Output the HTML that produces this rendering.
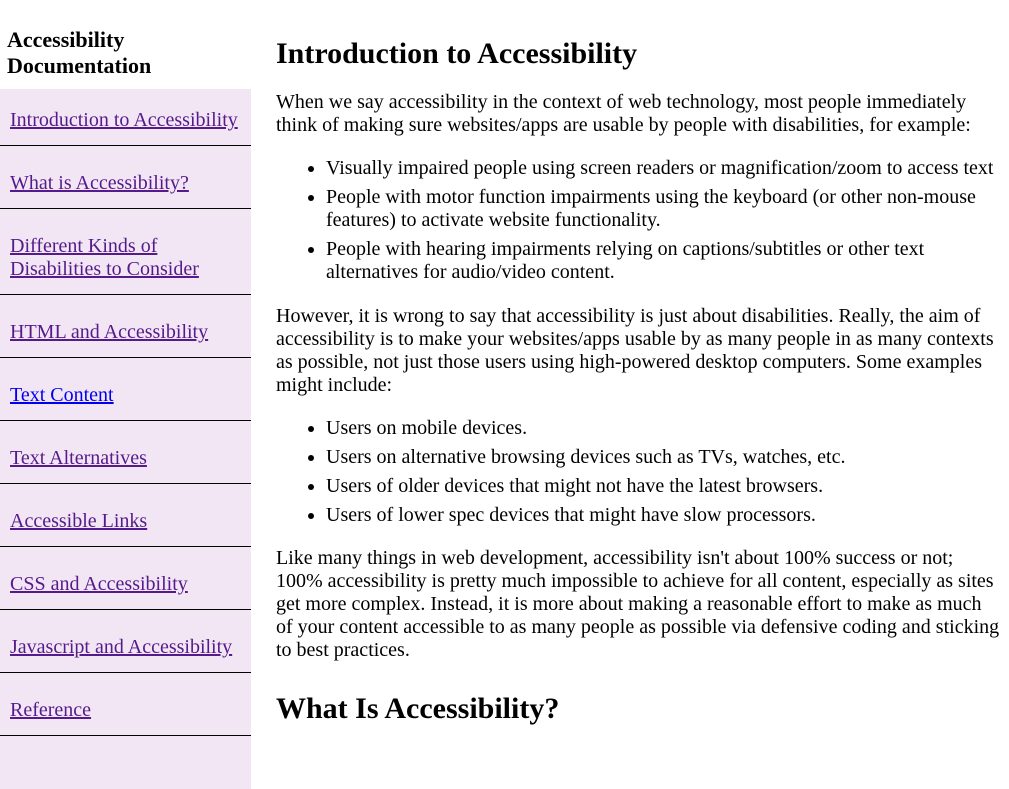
<!DOCTYPE html>
<html><head><meta charset="utf-8"><style>
*{margin:0;padding:0;box-sizing:border-box}
body{width:1009px;height:725px;overflow:hidden;background:#fff;font-family:"Liberation Serif",serif;color:#000;position:relative}
#title{position:absolute;left:7px;top:27px;font-size:22px;font-weight:bold;line-height:26px}
#nav{position:absolute;left:0;top:89px;width:251px;height:700px;background:#f2e6f4;list-style:none;padding:0}
#nav li{border-bottom:1px solid #000;height:63px;padding:26px 0 0 10px;font-size:20px;line-height:23px;margin:0}
#nav li:first-child{height:57px;padding-top:20px}
#nav li.two{height:86px}
#nav a{color:#551a8b;text-decoration:underline}
#nav a.u{color:#0000ee}
#main{position:absolute;left:276px;top:1px;width:730px;font-size:20px;line-height:23px}
h1{font-size:30px;line-height:36px;font-weight:bold;position:absolute;left:0;white-space:nowrap}
p,ul.c{position:absolute;left:0;white-space:nowrap}
ul.c{padding-left:50px}
ul.c li{margin-bottom:6px}
</style></head><body>
<div id="title">Accessibility<br>Documentation</div>
<ul id="nav">
<li><a href="#">Introduction to Accessibility</a></li>
<li><a href="#">What is Accessibility?</a></li>
<li class="two"><a href="#">Different Kinds of<br>Disabilities to Consider</a></li>
<li><a href="#">HTML and Accessibility</a></li>
<li><a class="u" href="#">Text Content</a></li>
<li><a href="#">Text Alternatives</a></li>
<li><a href="#">Accessible Links</a></li>
<li><a href="#">CSS and Accessibility</a></li>
<li><a href="#">Javascript and Accessibility</a></li>
<li><a href="#">Reference</a></li>
</ul>
<div id="main">
<h1 style="top:35px">Introduction to Accessibility</h1>
<p style="top:90px">When we say accessibility in the context of web technology, most people immediately<br>think of making sure websites/apps are usable by people with disabilities, for example:</p>
<ul class="c" style="top:156px">
<li>Visually impaired people using screen readers or magnification/zoom to access text</li>
<li>People with motor function impairments using the keyboard (or other non-mouse<br>features) to activate website functionality.</li>
<li>People with hearing impairments relying on captions/subtitles or other text<br>alternatives for audio/video content.</li>
</ul>
<p style="top:304px">However, it is wrong to say that accessibility is just about disabilities. Really, the aim of<br>accessibility is to make your websites/apps usable by as many people in as many contexts<br>as possible, not just those users using high-powered desktop computers. Some examples<br>might include:</p>
<ul class="c" style="top:416px">
<li>Users on mobile devices.</li>
<li>Users on alternative browsing devices such as TVs, watches, etc.</li>
<li>Users of older devices that might not have the latest browsers.</li>
<li>Users of lower spec devices that might have slow processors.</li>
</ul>
<p style="top:546px">Like many things in web development, accessibility isn't about 100% success or not;<br>100% accessibility is pretty much impossible to achieve for all content, especially as sites<br>get more complex. Instead, it is more about making a reasonable effort to make as much<br>of your content accessible to as many people as possible via defensive coding and sticking<br>to best practices.</p>
<h1 style="top:690px">What Is Accessibility?</h1>
</div>
</body></html>
